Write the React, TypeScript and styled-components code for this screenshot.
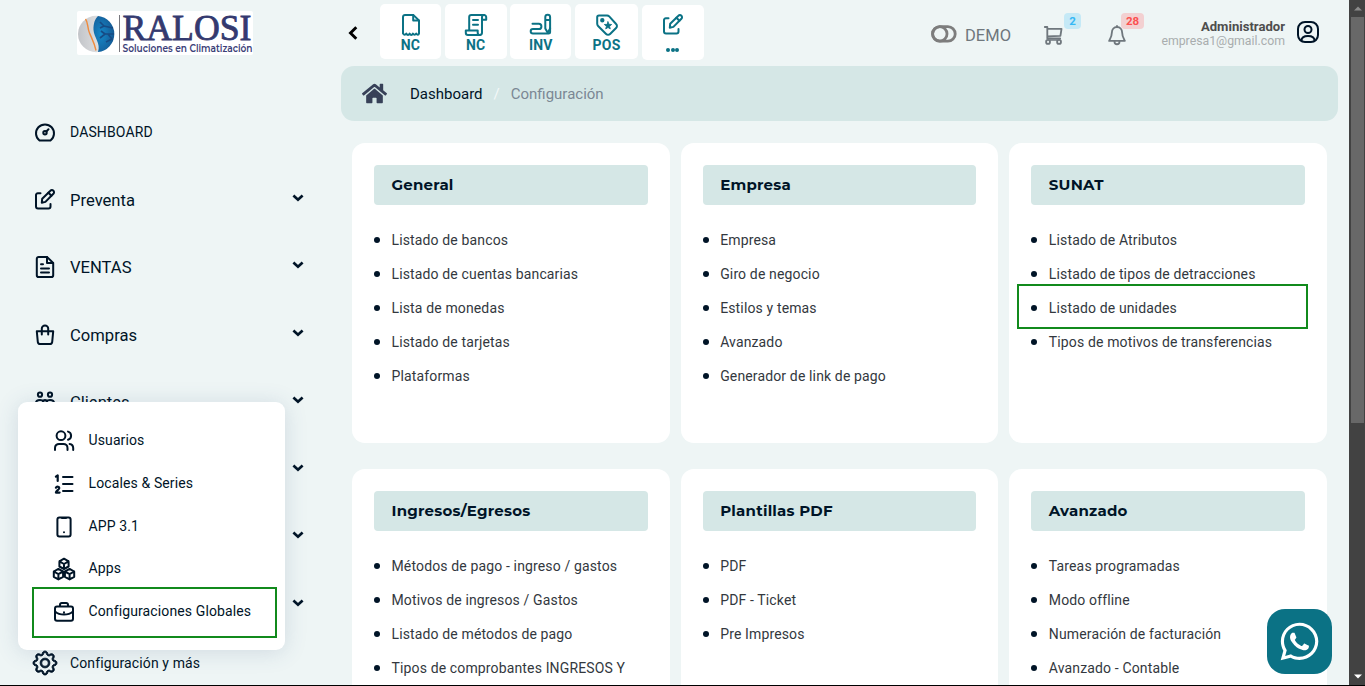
import React from 'react';
import styled, { createGlobalStyle } from 'styled-components';
import { FaHome, FaWhatsapp } from 'react-icons/fa';
import { BsGear } from 'react-icons/bs';

const ink = '#001427';
const teal = '#0b7285';

const GlobalStyle = createGlobalStyle`
  * { box-sizing: border-box; }
  body { margin: 0; overflow: hidden; background: #eef5f5; font-family: Roboto, sans-serif; color: ${ink}; }
  ul { list-style: none; margin: 0; padding: 0; }
  svg { display: block; flex: none; }
`;

const Page = styled.div`
  position: relative;
  display: grid;
  grid-template-columns: 330px 1fr 16px;
  height: 686px;
  overflow: hidden;
  border-bottom: 1px solid #000;
`;

const Sidebar = styled.aside`
  position: relative;
  height: 685px;
  display: flex;
  flex-direction: column;
`;

const LogoArea = styled.div`
  flex: none;
  height: 98.5px;
  padding: 11px 0 0 77px;
`;

const NavRow = styled.div`
  flex: none;
  height: 67.5px;
  padding: 0 26px 0 33px;
  display: flex;
  align-items: center;
`;

const NavIcon = styled.span`
  width: 24px;
  height: 24px;
  margin-right: 13px;
  display: flex;
  align-items: center;
  justify-content: center;
`;

const NavLabel = styled.span<{ $small?: boolean }>`
  flex: 1;
  padding-top: ${p => (p.$small ? 0 : 2.2)}px;
  font-size: ${p => (p.$small ? 14 : 16.6)}px;
  letter-spacing: ${p => (p.$small ? 0.12 : 0)}px;
  line-height: 20px;
`;

const NavChevron = styled.span`
  padding-bottom: 4px;
`;

const ConfigRow = styled(NavRow)`
  height: 48px;
`;

const Popup = styled.div`
  position: absolute;
  left: 18px;
  top: 402px;
  width: 267px;
  height: 248px;
  padding-top: 17px;
  background: #fff;
  border-radius: 9px;
  box-shadow: 0 2px 22px rgba(60, 90, 130, 0.17);
`;

const PopupRow = styled.div`
  height: 42.7px;
  padding-left: 34px;
  display: flex;
  align-items: center;
  font-size: 14px;
  letter-spacing: 0.12px;
`;

const PopupIcon = styled(NavIcon)`
  margin-right: 12.5px;
  padding-top: 2px;
`;

const Highlight = styled.div<{ $x: number; $y: number; $w: number; $h: number }>`
  position: absolute;
  left: ${p => p.$x}px;
  top: ${p => p.$y}px;
  width: ${p => p.$w}px;
  height: ${p => p.$h}px;
  border: 2px solid #118a1c;
  pointer-events: none;
`;

const Main = styled.main`
  height: 685px;
  overflow: hidden;
  padding: 0 11px;
`;

const TopBar = styled.header`
  height: 66px;
  display: flex;
  align-items: flex-start;
  padding: 4px 18px 0 7px;
`;

const Back = styled.div`
  padding: 22px 22px 0 0;
`;

const Shortcuts = styled.div`
  display: flex;
  gap: 3.7px;
`;

const Shortcut = styled.div<{ $w: number; $last?: boolean }>`
  width: ${p => p.$w}px;
  height: 55px;
  margin: ${p => (p.$last ? '1px 0 0 0' : '0')};
  padding-top: ${p => (p.$last ? 8 : 9)}px;
  background: #fff;
  border-radius: 5px;
  display: flex;
  flex-direction: column;
  align-items: center;
  color: ${teal};
  font-size: 14px;
  font-weight: 700;
  line-height: 16px;
  letter-spacing: 0.2px;
`;

const Dots = styled.div`
  display: flex;
  gap: 0.5px;
  margin-top: 11px;
  i { width: 4px; height: 4px; border-radius: 50%; background: ${teal}; }
`;

const Tools = styled.div`
  margin-left: auto;
  display: flex;
  align-items: flex-start;
  color: #6f777d;
`;

const Demo = styled.div`
  display: flex;
  align-items: center;
  gap: 8px;
  padding-top: 20px;
  font-size: 16.5px;
  line-height: 24px;
  svg { margin-top: -5px; }
`;

const ToolIcon = styled.div<{ $ml: number }>`
  position: relative;
  margin-left: ${p => p.$ml}px;
  padding-top: 20px;
`;

const Badge = styled.span<{ $bg: string; $fg: string; $w: number; $x: number }>`
  position: absolute;
  left: ${p => p.$x}px;
  top: 9px;
  width: ${p => p.$w}px;
  height: 16px;
  border-radius: 4px;
  background: ${p => p.$bg};
  color: ${p => p.$fg};
  font-size: 11.5px;
  font-weight: 700;
  line-height: 16px;
  text-align: center;
`;

const Account = styled.div`
  width: 129px;
  margin-left: 28px;
  padding-top: 16px;
  text-align: right;
  font-size: 13.1px;
  line-height: 14px;
  white-space: nowrap;
  b { display: block; color: #4d4d4d; font-weight: 700; }
  span { display: block; color: #a9adae; font-size: 12.3px; }
`;

const Avatar = styled.div`
  padding: 16px 0 0 11px;
  color: ${ink};
`;

const Breadcrumb = styled.nav`
  height: 55px;
  width: 997px;
  border-radius: 13px;
  background: #d5e7e6;
  display: flex;
  align-items: center;
  padding-left: 21px;
  font-size: 15px;
  color: #7b8794;
  b { font-weight: 400; color: ${ink}; margin-left: 23px; }
  i { font-style: normal; color: #f4f9f9; margin: 0 11px; }
`;

const CardGrid = styled.section`
  display: grid;
  grid-template-columns: repeat(3, 1fr);
  column-gap: 11px;
  row-gap: 26px;
  width: 975px;
  margin: 22px 0 0 11px;
`;

const Card = styled.article`
  height: 300px;
  padding: 22px;
  border-radius: 13px;
  background: #fff;
`;

const CardTitle = styled.h2`
  height: 40px;
  margin: 0 0 18px;
  padding-left: 17.5px;
  border-radius: 4px;
  background: #d5e7e6;
  font: 700 15px/39px Montserrat, Inter, sans-serif;
  letter-spacing: 0.22px;
`;

const Item = styled.li`
  height: 34px;
  display: flex;
  align-items: center;
  font-size: 14px;
  letter-spacing: 0.14px;
  color: #33383e;
  white-space: nowrap;
  &::before {
    content: '';
    width: 6px;
    height: 6px;
    margin-right: 11.5px;
    border-radius: 50%;
    background: ${ink};
  }
`;

const Scrollbar = styled.div`
  height: 685px;
  padding: 0 1px 0 2px;
  background: #424242;
  display: flex;
  flex-direction: column;
  align-items: center;
`;

const Thumb = styled.div`
  width: 13px;
  height: 406px;
  background: #686868;
`;

const Arrow = styled.div<{ $down?: boolean }>`
  height: 17px;
  margin-top: ${p => (p.$down ? 'auto' : '0')};
  display: flex;
  align-items: center;
`;

const ChatButton = styled.div`
  position: absolute;
  left: 1267px;
  top: 609px;
  width: 65px;
  height: 65px;
  border-radius: 18px;
  background: ${teal};
  color: #fff;
  display: flex;
  align-items: center;
  justify-content: center;
`;

type IconProps = { size?: number; sw?: number; children?: React.ReactNode };
const Svg = ({ size = 24, sw = 2, children }: IconProps) => (
  <svg width={size} height={size} viewBox="0 0 24 24" fill="none" stroke="currentColor" strokeWidth={sw} strokeLinecap="round" strokeLinejoin="round">
    {children}
  </svg>
);

const GaugeIcon = () => (
  <Svg>
    <path d="M6.5 20.5A9 9 0 1 1 17.5 20.5Z" />
    <circle cx="12" cy="12.8" r="1.7" />
    <path d="M13.3 11.5l2.2-2.2" />
  </Svg>
);
const EditIcon = ({ size = 24, sw = 2 }: IconProps) => (
  <Svg size={size} sw={sw}>
    <path d="M7.500 5.200H5A1.800 1.800 0 0 0 3 7V18.500a2 2 0 0 0 2 2h10.500a2 2 0 0 0 2-2v-2.500" />
    <path d="M8.800 14.800l.4-4.100 8.200-8a2.100 2.100 0 0 1 3 0 2.100 2.100 0 0 1 0 3l-8 8.200z" />
    <path d="M15.400 4.700l3 3" />
  </Svg>
);
const DocIcon = () => (
  <Svg>
    <path d="M14 1.900H5.600A1.800 1.800 0 0 0 3.800 3.700v16.600a1.800 1.800 0 0 0 1.800 1.800h12.800a1.800 1.800 0 0 0 1.800-1.800V8z" />
    <path d="M14 2v6h6M8 9.300h2M8 13.500h8M8 17.600h8" />
  </Svg>
);
const BagIcon = () => (
  <Svg>
    <path d="M3.800 8.300h16.400l-1 10.600a2.400 2.400 0 0 1-2.400 2.200H7.200a2.400 2.400 0 0 1-2.400-2.200z" />
    <path d="M8.800 11.500V5.600a3.200 3.200 0 0 1 6.400 0v5.900" />
  </Svg>
);
const TeamIcon = () => (
  <Svg>
    <circle cx="7" cy="4.700" r="2.100" />
    <circle cx="17" cy="4.700" r="2.100" />
    <path d="M3 14v-1c0-2 1.500-3 4-3s3 .7 3.500 1.400M21 14v-1c0-2-1.500-3-4-3s-3 .7-3.500 1.400" />
    <circle cx="12" cy="12" r="2" />
  </Svg>
);
const UsersIcon = () => (
  <Svg>
    <circle cx="9" cy="6.700" r="4.400" />
    <path d="M3 21v-2.100a4 4 0 0 1 4-4h4.500a4 4 0 0 1 4 4V21M16 2.600a4.200 4.200 0 0 1 0 8.100M17.600 14.900a4.200 4.200 0 0 1 3.600 4.100v2" />
  </Svg>
);
const NumberedListIcon = () => (
  <Svg>
    <path d="M11 5h9.500M11 12h9.500M11 19h9.500" />
    <path d="M3.900 4.600L5.700 3.300V9M3.900 15.700c.8-1.600 3.700-1.200 3.300.6-.2 1.300-3.300 2.700-3.300 4.300h3.700" strokeWidth="2.200" />
  </Svg>
);
const PhoneIcon = () => (
  <Svg>
    <rect x="5.400" y="2.500" width="13.200" height="19" rx="2" />
    <path d="M10 3h4M12 17.200v.1" />
  </Svg>
);
const CubesIcon = () => (
  <Svg sw={2}>
    <path d="M12 1.700l4.600 2.600v5.200L12 12 7.400 9.500V4.300zM7.400 4.300L12 7l4.600-2.700M12 7v5" />
    <path d="M6.400 11.900l4.700 2.600v5.300l-4.700 2.600-4.600-2.600v-5.300zM1.800 14.500l4.600 2.600 4.700-2.600M6.400 17.100v5.200" />
    <path d="M17.600 11.900l4.600 2.600v5.300l-4.600 2.600-4.700-2.600v-5.300zM12.900 14.500l4.700 2.600 4.600-2.600M17.600 17.100v5.200" />
  </Svg>
);
const BriefcaseIcon = () => (
  <Svg>
    <rect x="3" y="6.400" width="18" height="14.400" rx="2" />
    <path d="M8 6V4.700A1.800 1.800 0 0 1 9.800 3h4.400A1.800 1.800 0 0 1 16 4.700V6M3.300 11.600c2.300 2.200 5.300 3 8.700 3s6.400-.8 8.700-3M12 12.300v.1" />
  </Svg>
);
const ReceiptIcon = () => (
  <Svg>
    <path d="M14.200 1.900H6A2 2 0 0 0 4 3.900V20.500c1 1.500 2.300 1.500 3.300.1 1 1.800 2.400 1.800 3.300 0 1 1.800 2.400 1.800 3.300 0 1 1.400 2.300 1.400 3.300 0 1 1.400 2.400 1.400 2.800-.1V7.500z" />
    <path d="M14.200 2v5.500h5.600" />
  </Svg>
);
const ScrollIcon = () => (
  <Svg>
    <path d="M5.200 17V4.100A2.100 2.100 0 0 1 7.300 2H20a2.200 2.200 0 0 1 2.200 2.200v2.500h-4.200V19.800a2.100 2.100 0 0 1-2.100 2.100" />
    <path d="M18 6.700V4.200A2.100 2.100 0 0 1 20 2M15.900 21.900H4a2.200 2.200 0 0 1-2.200-2.200V17.400h11.900v2.300a2.200 2.200 0 0 0 2.200 2.200M9 7h5M9 11.800h5" />
  </Svg>
);
const InventoryIcon = () => (
  <Svg>
    <path d="M16.300 4.100a2.400 2.400 0 0 1 4.800 0V15.500l-2.400 4.300-2.400-4.300zM16.300 7h4.800" />
    <path d="M3.500 10.800h6.300a2.600 2.600 0 0 1 0 5.200H4a2.300 2.300 0 0 0 0 4.600H19.700a1.400 1.400 0 0 0 1.400-1.400V15" />
  </Svg>
);
const TagIcon = () => (
  <Svg>
    <path d="M2.200 4.200v6.600a3 3 0 0 0 .9 2.200l8 8a2.800 2.800 0 0 0 4 0l6-6a2.800 2.800 0 0 0 0-4l-6.900-7.600A3 3 0 0 0 12 2.400H4a1.800 1.800 0 0 0-1.800 1.800z" />
    <circle cx="7.300" cy="7.200" r="1.200" fill="currentColor" />
    <path d="M13 8.800l1 2.500 2.700.2-2.100 1.700.7 2.700-2.300-1.400-2.300 1.400.7-2.700-2.100-1.700 2.700-.2z" fill="currentColor" strokeWidth=".8" />
  </Svg>
);
const CartIcon = () => (
  <Svg size={22}>
    <path d="M2 3.300h2.700v12.500h14M4.700 5.300h15.500l-1.200 7.600L4.700 13.500" />
    <circle cx="5.500" cy="19.500" r="2.100" />
    <circle cx="17.500" cy="19.500" r="2.100" />
    <path d="M7.500 17.400h8" strokeWidth="1.500" />
  </Svg>
);
const BellIcon = () => (
  <Svg size={22}>
    <path d="M12 3.300c-3.300 0-5.600 2.600-5.600 6.100 0 4.600-1.600 6.600-3 9h17.200c-1.400-2.400-3-4.400-3-9 0-3.500-2.300-6.100-5.600-6.100zM12 2.200v1M9.300 19v.4a2.700 2.700 0 0 0 5.400 0V19" />
  </Svg>
);
const AvatarIcon = () => (
  <Svg>
    <rect x="2" y="1.900" width="20" height="20.200" rx="7" />
    <circle cx="12" cy="9.500" r="3.500" />
    <path d="M5.500 20.500c0-3.500 2.500-4.600 6.500-4.600s6.500 1.100 6.500 4.600" />
  </Svg>
);
const ToggleIcon = () => (
  <svg width="26" height="18" viewBox="0 0 26 18" fill="none" stroke="#7d7d7d" strokeWidth="2.800">
    <rect x="1.600" y="1.600" width="22.600" height="14.600" rx="7.300" />
    <rect x="1.600" y="1.600" width="14.400" height="14.600" rx="7.200" />
  </svg>
);
const Chevron = () => (
  <svg width="12" height="8" viewBox="0 0 12 8" fill="none" stroke={ink} strokeWidth="2.700">
    <path d="M1.400 1.500L6 5.700l4.600-4.200" />
  </svg>
);

const Logo = () => (
  <svg width="176" height="44" viewBox="0 0 176 44" overflow="visible">
    <defs>
      <linearGradient id="silver" x1="0" x2="1">
        <stop offset="0" stopColor="#c2c4c8" />
        <stop offset="1" stopColor="#f4f4f4" />
      </linearGradient>
      <radialGradient id="sky" cx=".35" cy=".5" r=".7">
        <stop offset="0" stopColor="#1688c8" />
        <stop offset="1" stopColor="#14558f" />
      </radialGradient>
    </defs>
    <rect width="176" height="44" rx="2" fill="#fff" />
    <circle cx="19.200" cy="23" r="18.200" fill="url(#silver)" />
    <path d="M21 4.900A18.200 18.200 0 0 1 21 41.100C24 32 17 27 16.500 19 16.300 12 18 8 21 4.900z" fill="url(#sky)" />
    <path d="M8.500 8c3 4 1.500 8 4 14s5 10 6.500 17.500" fill="none" stroke="#f08b3c" strokeWidth="1.400" />
    <path d="M36 17l-9-2-4-4M27 15l-4 2M37 23H28l-5 4M28 23l-4-3M31 23l4 5-6 3" fill="none" stroke="#174b84" strokeWidth="1.700" />
    <path d="M42.500 4v37" stroke="#77777e" strokeWidth="1" />
    <text x="45.500" y="29" fontFamily="Liberation Serif, serif" fontSize="35" fill="#34396f" stroke="#34396f" strokeWidth=".8" textLength="129" lengthAdjust="spacingAndGlyphs">RALOSI</text>
    <text x="45.500" y="41" fontFamily="Montserrat, Lato, sans-serif" fontWeight="600" fontSize="10" fill="#3b4078" textLength="130" lengthAdjust="spacingAndGlyphs">Soluciones en Climatización</text>
  </svg>
);

const nav = [
  { label: 'DASHBOARD', icon: <GaugeIcon />, small: true },
  { label: 'Preventa', icon: <EditIcon /> },
  { label: 'VENTAS', icon: <DocIcon /> },
  { label: 'Compras', icon: <BagIcon /> },
  { label: 'Clientes', icon: <TeamIcon /> },
  { label: '', icon: null },
  { label: '', icon: null },
  { label: '', icon: null },
];

const popup = [
  { label: 'Usuarios', icon: <UsersIcon /> },
  { label: 'Locales & Series', icon: <NumberedListIcon /> },
  { label: 'APP 3.1', icon: <PhoneIcon /> },
  { label: 'Apps', icon: <CubesIcon /> },
  { label: 'Configuraciones Globales', icon: <BriefcaseIcon /> },
];

const shortcuts = [
  { label: 'NC', w: 61, icon: <ReceiptIcon /> },
  { label: 'NC', w: 62, icon: <ScrollIcon /> },
  { label: 'INV', w: 61, icon: <InventoryIcon /> },
  { label: 'POS', w: 63, icon: <TagIcon /> },
];

const cards = [
  { title: 'General', items: ['Listado de bancos', 'Listado de cuentas bancarias', 'Lista de monedas', 'Listado de tarjetas', 'Plataformas'] },
  { title: 'Empresa', items: ['Empresa', 'Giro de negocio', 'Estilos y temas', 'Avanzado', 'Generador de link de pago'] },
  { title: 'SUNAT', items: ['Listado de Atributos', 'Listado de tipos de detracciones', 'Listado de unidades', 'Tipos de motivos de transferencias'] },
  { title: 'Ingresos/Egresos', items: ['Métodos de pago - ingreso / gastos', 'Motivos de ingresos / Gastos', 'Listado de métodos de pago', 'Tipos de comprobantes INGRESOS Y'] },
  { title: 'Plantillas PDF', items: ['PDF', 'PDF - Ticket', 'Pre Impresos'] },
  { title: 'Avanzado', items: ['Tareas programadas', 'Modo offline', 'Numeración de facturación', 'Avanzado - Contable'] },
];

export default function App() {
  return (
    <>
      <GlobalStyle />
      <Page>
        <Sidebar>
          <LogoArea><Logo /></LogoArea>
          {nav.map((n, i) => (
            <NavRow key={i}>
              <NavIcon>{n.icon}</NavIcon>
              <NavLabel $small={n.small}>{n.label}</NavLabel>
              {i > 0 && <NavChevron><Chevron /></NavChevron>}
            </NavRow>
          ))}
          <ConfigRow>
            <NavIcon><BsGear size={24} strokeWidth={0.6} overflow="visible" /></NavIcon>
            <NavLabel $small>Configuración y más</NavLabel>
          </ConfigRow>
          <Popup>
            {popup.map(p => (
              <PopupRow key={p.label}>
                <PopupIcon>{p.icon}</PopupIcon>
                {p.label}
              </PopupRow>
            ))}
          </Popup>
          <Highlight $x={32} $y={587} $w={245} $h={51} />
        </Sidebar>
        <Main>
          <TopBar>
            <Back>
              <svg width="10" height="14" viewBox="0 0 10 14" fill="none" stroke="#000" strokeWidth="2.900">
                <path d="M8.300 1.300L2.500 7l5.800 5.700" />
              </svg>
            </Back>
            <Shortcuts>
              {shortcuts.map((s, i) => (
                <Shortcut key={i} $w={s.w}>{s.icon}<span>{s.label}</span></Shortcut>
              ))}
              <Shortcut $w={62} $last>
                <EditIcon />
                <Dots><i /><i /><i /></Dots>
              </Shortcut>
            </Shortcuts>
            <Tools>
              <Demo><ToggleIcon />DEMO</Demo>
              <ToolIcon $ml={32}>
                <CartIcon />
                <Badge $x={21} $w={17} $bg="#c5e9f6" $fg="#35b8f5">2</Badge>
              </ToolIcon>
              <ToolIcon $ml={41}>
                <BellIcon />
                <Badge $x={15} $w={23} $bg="#f3d0d1" $fg="#fb5050">28</Badge>
              </ToolIcon>
              <Account><b>Administrador</b><span>empresa1@gmail.com</span></Account>
              <Avatar><AvatarIcon /></Avatar>
            </Tools>
          </TopBar>
          <Breadcrumb>
            <FaHome size={25} color="#374158" />
            <b>Dashboard</b><i>/</i>Configuración
          </Breadcrumb>
          <CardGrid>
            {cards.map(c => (
              <Card key={c.title}>
                <CardTitle>{c.title}</CardTitle>
                <ul>{c.items.map(t => <Item key={t}>{t}</Item>)}</ul>
              </Card>
            ))}
          </CardGrid>
        </Main>
        <Scrollbar>
          <Arrow><svg width="8" height="5" viewBox="0 0 8 5"><path d="M0 4.500L4 .5l4 4z" fill="#8b8b8b" /></svg></Arrow>
          <Thumb />
          <Arrow $down><svg width="8" height="5" viewBox="0 0 8 5"><path d="M0 .5l4 4 4-4z" fill="#fff" /></svg></Arrow>
        </Scrollbar>
        <Highlight $x={1017} $y={284} $w={291} $h={45} />
        <ChatButton><FaWhatsapp size={43} /></ChatButton>
      </Page>
    </>
  );
}
